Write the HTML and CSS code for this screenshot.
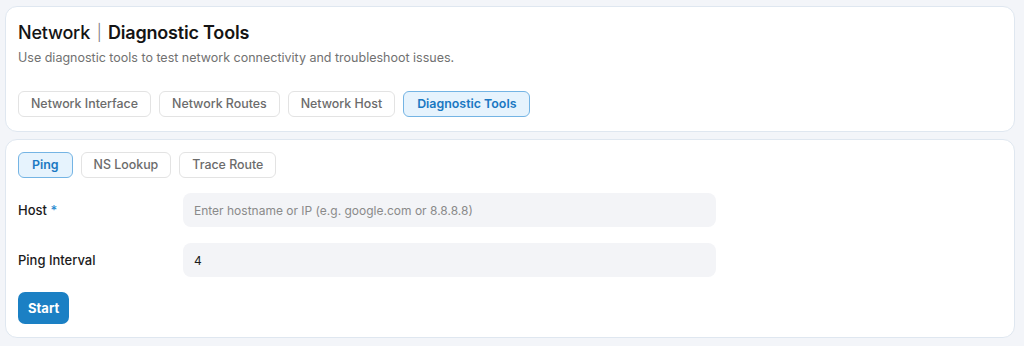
FILE: index.html
```html
<!DOCTYPE html>
<html lang="en">
<head>
  <meta charset="UTF-8">
  <meta name="viewport" content="width=device-width, initial-scale=1.0">
  <title>Network | Diagnostic Tools</title>
  <link rel="stylesheet" href="styles.css">
</head>
<body>

  <!-- Page header card -->
  <div class="card header-card">
    <h1>Network <span class="sep">|</span> <span class="page-name">Diagnostic Tools</span></h1>
    <p class="subtitle">Use diagnostic tools to test network connectivity and troubleshoot issues.</p>
    <div class="tabs">
      <a href="#" class="tab">Network Interface</a>
      <a href="#" class="tab">Network Routes</a>
      <a href="#" class="tab">Network Host</a>
      <a href="#" class="tab active">Diagnostic Tools</a>
    </div>
  </div>

  <!-- Tool card -->
  <div class="card tool-card">
    <div class="tabs">
      <a href="#" class="tab active">Ping</a>
      <a href="#" class="tab">NS Lookup</a>
      <a href="#" class="tab">Trace Route</a>
    </div>

    <form class="tool-form" onsubmit="return false;">
      <div class="form-row">
        <label for="host">Host <span class="required">*</span></label>
        <input type="text" id="host" placeholder="Enter hostname or IP (e.g. google.com or 8.8.8.8)">
      </div>
      <div class="form-row">
        <label for="interval">Ping Interval</label>
        <input type="text" id="interval" value="4">
      </div>
      <button type="submit" class="btn-start">Start</button>
    </form>
  </div>

</body>
</html>
```

FILE: styles.css
```css
/* Reset */
* {
  margin: 0;
  padding: 0;
  box-sizing: border-box;
  font-family: Inter, "Noto Sans", sans-serif;
}

body {
  background-color: #f3f5f9;
  color: #1b1b1b;
  padding: 6px 9px 0 5px;
}

/* Cards */
.card {
  background-color: #fff;
  border: 1px solid #dfe7f0;
  border-radius: 12px;
  padding: 0 12px;
}
.header-card {
  height: 126px;
  padding-top: 14px;
}
.tool-card {
  margin-top: 7px;
  height: 199px;
  padding-top: 12px;
}

/* Header */
.header-card h1 {
  font-size: 18px;
  font-weight: 500;
  color: #141414;
  line-height: 24px;
  letter-spacing: -0.2px;
}
.header-card h1 .sep {
  font-weight: 300;
  font-size: 16px;
  color: #777;
  margin: 0 2px;
  position: relative;
  top: -1px;
}
.header-card h1 .page-name {
  font-weight: 600;
}
.subtitle {
  margin-top: 5px;
  font-size: 12.5px;
  color: #717171;
  line-height: 16px;
}
.header-card .tabs {
  margin-top: 25px;
}

/* Tabs */
.tabs {
  display: flex;
  gap: 8px;
}
.tab {
  display: inline-block;
  height: 26px;
  line-height: 24px;
  padding: 0 12px;
  font-size: 12.4px;
  font-weight: 500;
  color: #6b6b6b;
  text-decoration: none;
  border: 1px solid #e3e3e3;
  border-radius: 6px;
  background-color: #fff;
}
.tab.active {
  padding: 0 13px;
  background-color: #e6f3fd;
  border-color: #74b4e4;
  color: #1a78c2;
  font-weight: 600;
}

/* Form */
.tool-form {
  margin-top: 15px;
  display: flex;
  flex-direction: column;
  align-items: flex-start;
  gap: 16px;
}
.form-row {
  display: flex;
  align-items: center;
}
.form-row label {
  width: 165px;
  font-size: 13px;
  font-weight: 500;
  color: #1b1b1b;
}
.required {
  color: #2a8bd0;
}
.form-row input {
  width: 533px;
  height: 34px;
  border: none;
  border-radius: 8px;
  background-color: #f3f4f7;
  padding: 0 11px;
  font-size: 12px;
  color: #1b1b1b;
  outline: none;
}
.form-row input::placeholder {
  color: #8a8a8a;
}
.btn-start {
  margin-top: -1px;
  height: 32px;
  padding: 0 10px;
  border: none;
  border-radius: 7px;
  background-color: #1b80c4;
  color: #fff;
  font-size: 13px;
  font-weight: 700;
  cursor: pointer;
}
```
